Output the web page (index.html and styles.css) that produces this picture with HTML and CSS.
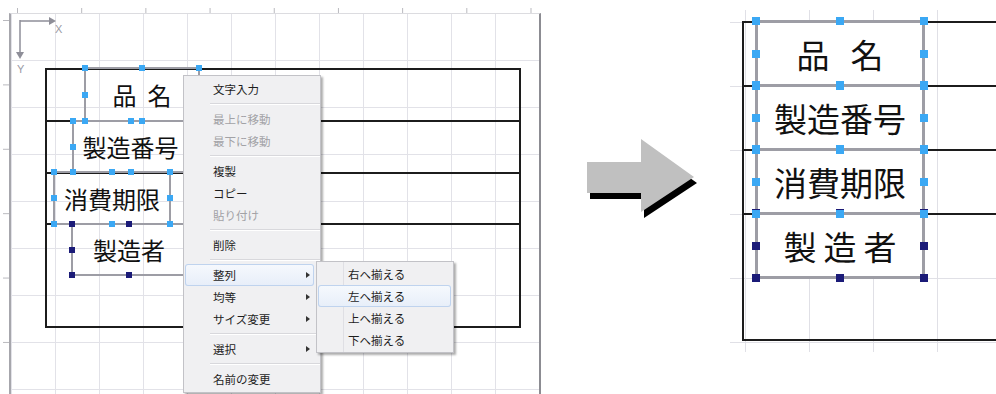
FILE: index.html
```html
<!DOCTYPE html>
<html lang="ja">
<head>
    <meta charset="UTF-8">
    <meta name="viewport" content="width=device-width, initial-scale=1.0">
    <title>ラベルの整列</title>
    <link rel="stylesheet" href="styles.css">
</head>
<body>
<main class="stage">
    <section class="editor">
        <div class="corner"></div>
        <div class="ruler-top"></div>
        <div class="ruler-left"></div>
        <div class="canvas">
            <svg class="axis" width="60" height="62" viewBox="0 0 60 62">
                <line x1="9" y1="6" x2="9" y2="40" stroke="#8e8e98" stroke-width="1.5"/>
                <polygon points="5,38 13,38 9,45" fill="#8e8e98"/>
                <line x1="9" y1="7" x2="40" y2="7" stroke="#8e8e98" stroke-width="1.5"/>
                <polygon points="38,3 38,11 45,7" fill="#8e8e98"/>
                <text x="44" y="19" class="axis-text">X</text>
                <text x="6" y="59" class="axis-text">Y</text>
            </svg>

            <div class="sheet small">
                <div class="row r1"></div>
                <div class="row r2"></div>
                <div class="row r3"></div>
                <div class="row r4"></div>
            </div>

            <div class="label sel lb-name"><span class="wide">品名</span>
                <i class="h tl"></i><i class="h t"></i><i class="h tr"></i><i class="h l"></i>
                <i class="h r"></i><i class="h bl"></i><i class="h b"></i><i class="h br"></i>
            </div>
            <div class="label sel lb-serial"><span>製造番号</span>
                <i class="h tl"></i><i class="h t"></i><i class="h tr"></i><i class="h l"></i>
                <i class="h r"></i><i class="h bl"></i><i class="h b"></i><i class="h br"></i>
            </div>
            <div class="label sel lb-date"><span>消費期限</span>
                <i class="h tl"></i><i class="h t"></i><i class="h tr"></i><i class="h l"></i>
                <i class="h r"></i><i class="h bl"></i><i class="h b"></i><i class="h br"></i>
            </div>
            <div class="label focus lb-maker"><span>製造者</span>
                <i class="h tl"></i><i class="h t"></i><i class="h tr"></i><i class="h l"></i>
                <i class="h r"></i><i class="h bl"></i><i class="h b"></i><i class="h br"></i>
            </div>
        </div>

        <div class="menu main">
            <div class="item">文字入力</div>
            <div class="sep"></div>
            <div class="item off">最上に移動</div>
            <div class="item off">最下に移動</div>
            <div class="sep"></div>
            <div class="item">複製</div>
            <div class="item">コピー</div>
            <div class="item off">貼り付け</div>
            <div class="sep"></div>
            <div class="item">削除</div>
            <div class="sep"></div>
            <div class="item more hot">整列</div>
            <div class="item more">均等</div>
            <div class="item more">サイズ変更</div>
            <div class="sep"></div>
            <div class="item more">選択</div>
            <div class="sep"></div>
            <div class="item">名前の変更</div>
        </div>

        <div class="menu sub">
            <div class="item">右へ揃える</div>
            <div class="item hot">左へ揃える</div>
            <div class="item">上へ揃える</div>
            <div class="item">下へ揃える</div>
        </div>
    </section>

    <div class="arrow">
        <svg width="116" height="86" viewBox="0 0 116 86">
            <polygon points="5,32 59,32 59,9 112,47 59,82 59,63 5,63" fill="#000"/>
            <polygon points="2,26 56,26 56,3 109,41 56,76 56,57 2,57" fill="#c0c0c0"/>
        </svg>
    </div>

    <section class="preview">
        <div class="sheet big">
            <div class="row r1"></div>
            <div class="row r2"></div>
            <div class="row r3"></div>
            <div class="row r4"></div>
        </div>
        <div class="stack">
            <div class="box sel"><span class="wide">品名</span>
                <i class="h tl"></i><i class="h t"></i><i class="h tr"></i><i class="h l"></i>
                <i class="h r"></i><i class="h bl"></i><i class="h b"></i><i class="h br"></i>
            </div>
            <div class="box sel"><span>製造番号</span>
                <i class="h tl"></i><i class="h t"></i><i class="h tr"></i><i class="h l"></i>
                <i class="h r"></i><i class="h bl"></i><i class="h b"></i><i class="h br"></i>
            </div>
            <div class="box sel"><span>消費期限</span>
                <i class="h tl"></i><i class="h t"></i><i class="h tr"></i><i class="h l"></i>
                <i class="h r"></i><i class="h bl"></i><i class="h b"></i><i class="h br"></i>
            </div>
            <div class="box focus"><span class="spaced">製造者</span>
                <i class="h tl"></i><i class="h t"></i><i class="h tr"></i><i class="h l"></i>
                <i class="h r"></i><i class="h bl"></i><i class="h b"></i><i class="h br"></i>
            </div>
        </div>
    </section>
</main>
</body>
</html>
```

FILE: styles.css
```css
* {
    box-sizing: border-box;
}
body {
    margin: 0;
    background: #fff;
    color: #111;
    font-family: "Noto Sans CJK JP", "Noto Sans", sans-serif;
}
.stage {
    display: flex;
    width: 996px;
    height: 394px;
    overflow: hidden;
}

/* left: editor window */
.editor {
    position: relative;
    flex: none;
    width: 541px;
    display: grid;
    grid-template-columns: 9px 532px;
    grid-template-rows: 13px 381px;
}
.ruler-top {
    grid-column: 2;
    grid-row: 1;
    background: linear-gradient(to right, #b9b9be 1px, transparent 1px) 8px 8px / 64.2px 5px repeat-x;
}
.ruler-left {
    grid-column: 1;
    grid-row: 2;
    background: linear-gradient(#b9b9be 1px, transparent 1px) 3px 7px / 6px 64.4px repeat-y;
}
.canvas {
    grid-column: 2;
    grid-row: 2;
    position: relative;
    padding: 54px 0 0 34px;
    border-left: 2px solid #a6a6ac;
    border-top: 1px solid #dcdce0;
    border-right: 2px solid #8c8c92;
    background-color: #fff;
    background-image: linear-gradient(to right, #e2e2e8 1px, transparent 1px),
                      linear-gradient(#e2e2e8 1px, transparent 1px);
    background-size: 44px 100%, 100% 47px;
    background-position: 44px 0, 0 46px;
}
.axis {
    position: absolute;
    left: 0;
    top: 0;
}
.axis-text {
    font-family: "Liberation Sans", sans-serif;
    font-size: 11px;
    fill: #9a9aa4;
}

.sheet {
    border: 2px solid #1c1c1c;
}
.sheet .row + .row {
    border-top: 2px solid #1c1c1c;
}
.sheet.small {
    width: 476px;
}
.small .r1 { height: 50px; }
.small .r2 { height: 52px; }
.small .r3 { height: 51px; }
.small .r4 { height: 103px; }

/* labels on the canvas */
.label, .box {
    --hs: 6px;
    --ho: -4px;
    display: flex;
    align-items: center;
    justify-content: center;
    border: 2px solid #9d9da5;
    font-size: 24px;
    white-space: nowrap;
}
.label {
    position: absolute;
}
.lb-name   { left: 73px; top: 53px; width: 116px; height: 55px; }
.lb-serial { left: 61px; top: 106px; width: 117px; height: 53px; }
.lb-date   { left: 42px; top: 157px; width: 118px; height: 54px; }
.lb-maker  { left: 60px; top: 209px; width: 116px; height: 53px; }
.label .wide {
    letter-spacing: 11px;
    text-indent: 11px;
}

.h {
    position: absolute;
    width: var(--hs);
    height: var(--hs);
}
.sel .h {
    background: #3ba8f4;
    z-index: 3;
}
.focus .h {
    background: #1b1b78;
    z-index: 2;
}
.tl { left: var(--ho); top: var(--ho); }
.t  { left: calc(50% - var(--hs) / 2); top: var(--ho); }
.tr { right: var(--ho); top: var(--ho); }
.l  { left: var(--ho); top: calc(50% - var(--hs) / 2); }
.r  { right: var(--ho); top: calc(50% - var(--hs) / 2); }
.bl { left: var(--ho); bottom: var(--ho); }
.b  { left: calc(50% - var(--hs) / 2); bottom: var(--ho); }
.br { right: var(--ho); bottom: var(--ho); }

/* context menu */
.menu {
    position: absolute;
    z-index: 10;
    padding: 2px 0;
    background: #f0f0f2;
    border: 1px solid #c2c2c7;
    box-shadow: 2px 2px 2px rgba(0, 0, 0, 0.32);
    font-size: 11.5px;
}
.menu.main {
    left: 183px;
    top: 75px;
    width: 138px;
}
.menu.sub {
    left: 316px;
    top: 261px;
    width: 138px;
    padding: 1px 0;
    background: linear-gradient(to right, transparent 26px, #dfdfe4 26px, #dfdfe4 27px, transparent 27px), #f0f0f2;
}
.item {
    display: flex;
    align-items: center;
    height: 22px;
    margin: 0 6px 0 1px;
    padding-left: 28px;
    border-radius: 3px;
    color: #1d1d1d;
}
.sub .item {
    margin: 0 2px 0 1px;
    padding-left: 30px;
}
.item.off {
    color: #a2a2a6;
}
.item.hot {
    background: linear-gradient(#f6f9fd, #e7eef9);
    box-shadow: inset 0 0 0 1px #bfd3ee;
}
.item.more::after {
    content: "";
    margin-left: auto;
    margin-right: 4px;
    border-left: 4px solid #333;
    border-top: 3.5px solid transparent;
    border-bottom: 3.5px solid transparent;
}
.sep {
    height: 8px;
    margin-left: 26px;
    background: linear-gradient(transparent 3px, #d8d8dc 3px, #d8d8dc 4px, #fff 4px, #fff 5px, transparent 5px);
}

/* middle arrow */
.arrow {
    flex: none;
    width: 189px;
    padding: 136px 0 0 44px;
}

/* right: result */
.preview {
    position: relative;
    flex: none;
    width: 266px;
    height: 342px;
    margin-top: 10px;
    padding: 11px 0 0 12px;
    overflow: hidden;
    background-image: linear-gradient(to right, #e0e0e6 1.5px, transparent 1.5px),
                      linear-gradient(#e0e0e6 1.5px, transparent 1.5px);
    background-size: 64px 100%, 100% 64px;
    background-position: 15px 0, 0 12px;
}
.sheet.big {
    width: 300px;
    border-right: none;
}
.big .r1 { height: 62px; }
.big .r2, .big .r3 { height: 64px; }
.big .r4 { height: 126px; }

.stack {
    position: absolute;
    left: 25px;
    top: 10px;
    width: 170px;
}
.box {
    --hs: 8px;
    --ho: -6px;
    position: relative;
    height: 67px;
    border-width: 3px;
    background: #fff;
    font-size: 33px;
}
.box + .box {
    margin-top: -3px;
}
.box .wide {
    letter-spacing: 21px;
    text-indent: 21px;
}
.box .spaced {
    letter-spacing: 7px;
    text-indent: 7px;
}
```
